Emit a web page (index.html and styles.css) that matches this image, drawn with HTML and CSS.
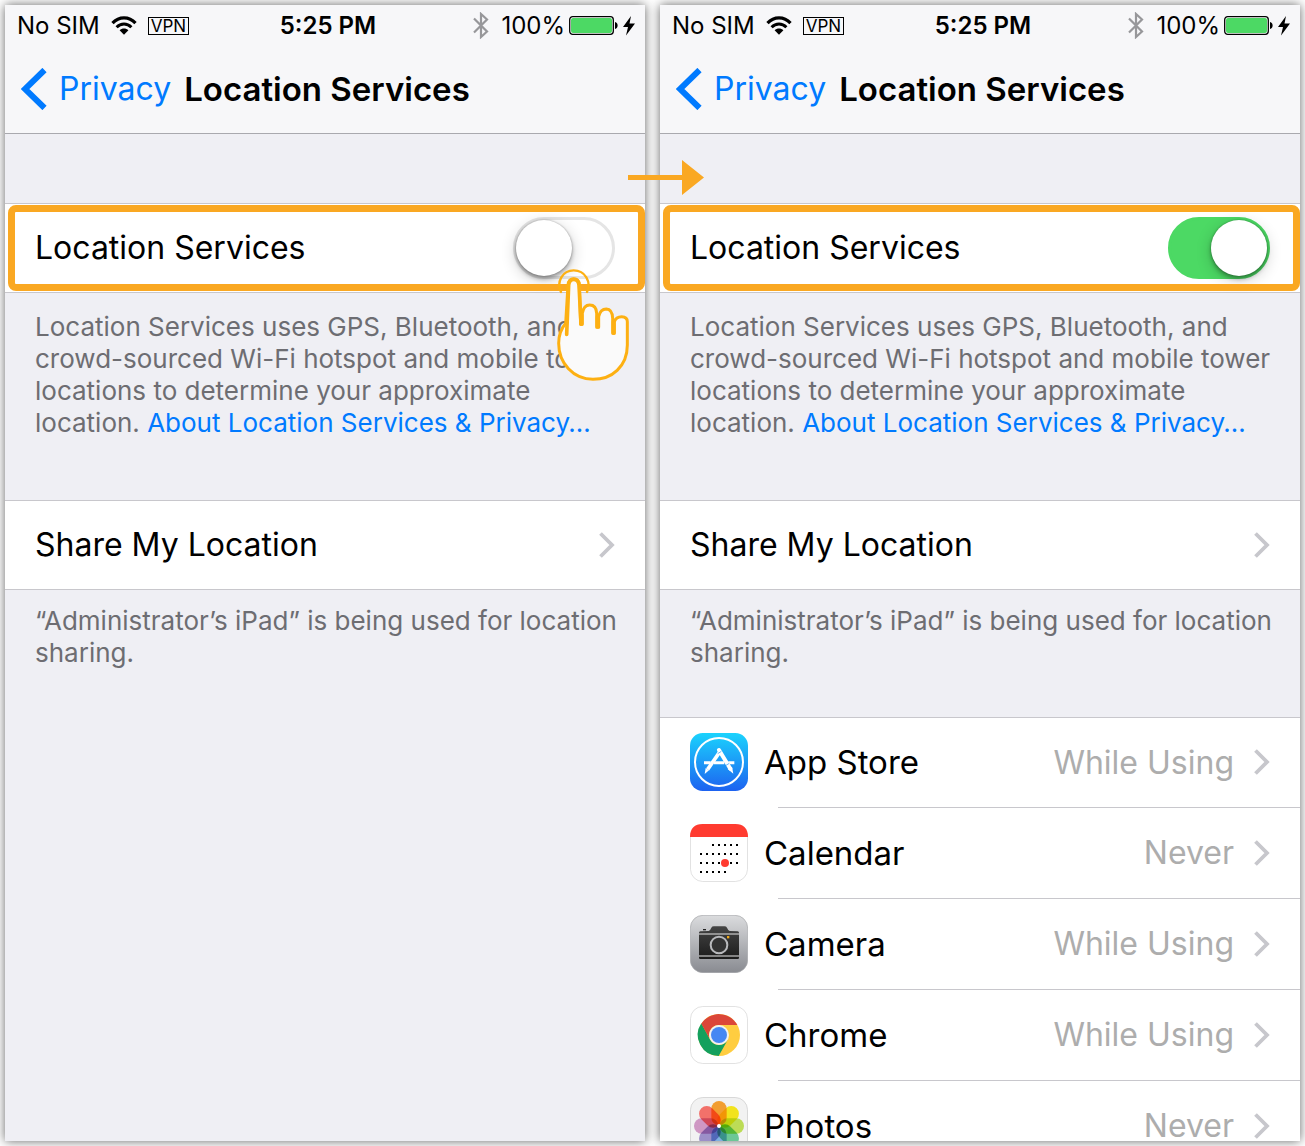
FILE: index.html
```html
<!DOCTYPE html>
<html lang="en">
<head>
  <meta charset="UTF-8" />
  <meta name="viewport" content="width=device-width, initial-scale=1.0" />
  <title>Location Services</title>
  <link rel="stylesheet" href="styles.css">
</head>
<body>

  <!-- shared icons -->
  <svg class="sprite" aria-hidden="true">
    <symbol id="wifi" viewBox="0 0 26 19">
      <path d="M1.5 7.2C8 .2 18 .2 24.500 7.200" fill="none" stroke="#000" stroke-width="3.200"/>
      <path d="M5.600 11.300C10 7 16 7 20.400 11.300" fill="none" stroke="#000" stroke-width="3"/>
      <path d="M8.600 14.300C11 12 15 12 17.400 14.300L13 18.800Z"/>
    </symbol>
    <symbol id="bluetooth" viewBox="0 0 16 27">
      <path d="M1 6.500L14 19.500L8 25V2L14 7.500L1 20.500" fill="none" stroke="#97979a" stroke-width="2.200"/>
    </symbol>
    <symbol id="battery" viewBox="0 0 50 19">
      <rect x=".7" y=".7" width="43.600" height="17.600" rx="3" fill="#fff" stroke="#000" stroke-width="1.300"/>
      <rect x="2" y="2" width="41" height="15" rx="2" fill="#4cd964"/>
      <path d="M46 6C49.500 6.500 49.500 12.500 46 13Z"/>
    </symbol>
    <symbol id="bolt" viewBox="0 0 12 20">
      <path d="M8 0L0 11H5L3 19.500L12 7.500H6.500Z"/>
    </symbol>
    <symbol id="back" viewBox="0 0 26 42">
      <path d="M23.500 2L4 21L23.500 40" fill="none" stroke="#007aff" stroke-width="6"/>
    </symbol>
    <symbol id="chevron" viewBox="0 0 16 26">
      <path d="M1.500 1.500L13 13L1.500 24.500" fill="none" stroke="#c7c7cc" stroke-width="3.800"/>
    </symbol>
  </svg>

  <main class="steps">

    <!-- step 1: switch is off -->
    <section class="screen">
      <div class="status">
        <div class="status-left">
          <span>No SIM</span>
          <svg class="wifi"><use href="#wifi"/></svg>
          <span class="vpn">VPN</span>
        </div>
        <strong class="time">5:25 PM</strong>
        <div class="status-right">
          <svg class="bluetooth"><use href="#bluetooth"/></svg>
          <span class="percent">100%</span>
          <svg class="battery"><use href="#battery"/></svg>
          <svg class="bolt"><use href="#bolt"/></svg>
        </div>
      </div>
      <nav class="navbar">
        <a class="back" href="#"><svg><use href="#back"/></svg>Privacy</a>
        <h1>Location Services</h1>
      </nav>

      <div class="row switch-row">
        <label for="location-off">Location Services</label>
        <input class="switch" type="checkbox" id="location-off">
        <div class="highlight"></div>
        <svg class="hand" viewBox="198 384 225 342" aria-hidden="true">
          <g stroke="#fdb012" stroke-linecap="round" stroke-linejoin="round">
            <path d="M213 456C198 425 218 391 251 391C285 391 305 425 291 456" fill="none" stroke-width="7"/>
            <path d="M227 550L234 435Q236 416 251 416Q267 416 268 435L272 553L277 553V520Q281 495 299 495Q319 495 320 520V562L326 562V530Q331 507 349 507Q367 508 368 535V580L373 580V545Q378 530 395 530Q412 530 412 545V615C412 680 365 718 309 718C250 718 206 670 206 610Q206 575 227 550Z" fill="#fafafa" stroke-width="9"/>
            <path d="M230 583L236 435Q238 418 251 418Q265 418 267 435L273 552" fill="none" stroke-width="11"/>
            <path d="M274 552V525M323 560V530M371 579V545" fill="none" stroke-width="12"/>
          </g>
        </svg>
      </div>
      <p class="note">Location Services uses GPS, Bluetooth, and crowd-sourced Wi-Fi hotspot and mobile tower locations to determine your approximate location. <a href="#">About Location Services &amp; Privacy…</a></p>

      <a class="row" href="#">
        <span>Share My Location</span>
        <svg class="chevron"><use href="#chevron"/></svg>
      </a>
      <p class="note sharing">“Administrator’s iPad” is being used for location sharing.</p>
    </section>

    <!-- step 2: switch is on, apps are listed -->
    <section class="screen">
      <div class="status">
        <div class="status-left">
          <span>No SIM</span>
          <svg class="wifi"><use href="#wifi"/></svg>
          <span class="vpn">VPN</span>
        </div>
        <strong class="time">5:25 PM</strong>
        <div class="status-right">
          <svg class="bluetooth"><use href="#bluetooth"/></svg>
          <span class="percent">100%</span>
          <svg class="battery"><use href="#battery"/></svg>
          <svg class="bolt"><use href="#bolt"/></svg>
        </div>
      </div>
      <nav class="navbar">
        <a class="back" href="#"><svg><use href="#back"/></svg>Privacy</a>
        <h1>Location Services</h1>
      </nav>

      <div class="row switch-row">
        <label for="location-on">Location Services</label>
        <input class="switch" type="checkbox" id="location-on" checked>
        <div class="highlight"></div>
      </div>
      <p class="note">Location Services uses GPS, Bluetooth, and crowd-sourced Wi-Fi hotspot and mobile tower locations to determine your approximate location. <a href="#">About Location Services &amp; Privacy…</a></p>

      <a class="row" href="#">
        <span>Share My Location</span>
        <svg class="chevron"><use href="#chevron"/></svg>
      </a>
      <p class="note sharing">“Administrator’s iPad” is being used for location sharing.</p>

      <div class="apps">
        <a class="app" href="#">
          <svg class="app-icon" viewBox="0 0 174 174">
            <defs>
              <linearGradient id="store-bg" x1="0" y1="0" x2="0" y2="1">
                <stop offset="0" stop-color="#1bd3fd"/>
                <stop offset="1" stop-color="#1d62f0"/>
              </linearGradient>
            </defs>
            <rect width="174" height="174" rx="38" fill="url(#store-bg)"/>
            <circle cx="87" cy="87" r="72" fill="none" stroke="#fff" stroke-width="6"/>
            <g stroke="#fff" stroke-width="9" fill="none">
              <path d="M42 89H62M72 89H103M115 89H133"/>
              <path d="M92 53L53 109" stroke-width="11"/>
              <path d="M87 51L121 107" stroke-width="12" stroke-linecap="round"/>
            </g>
            <path d="M47 105L57 112L44 123ZM113 108L126 101L130 122Z" fill="#fff"/>
            <path d="M83 62L94 55M108 97L118 91" stroke="#2196f8" stroke-width="2"/>
          </svg>
          <span class="app-name">App Store</span>
          <span class="app-access">While Using</span>
          <svg class="chevron"><use href="#chevron"/></svg>
        </a>
        <a class="app" href="#">
          <svg class="app-icon" viewBox="0 0 174 174">
            <rect x="1.500" y="1.500" width="171" height="171" rx="37" fill="#fff" stroke="#e2e2e2" stroke-width="3"/>
            <path d="M0 39C0 12 14 0 38 0H136C160 0 174 12 174 39Z" fill="#ff3b30"/>
            <g stroke="#000" stroke-width="6" stroke-dasharray="6 12">
              <path d="M66 63H144"/>
              <path d="M30 90H144"/>
              <path d="M30 117H144"/>
              <path d="M30 144H108"/>
            </g>
            <circle cx="105" cy="117" r="12" fill="#ff3b30"/>
          </svg>
          <span class="app-name">Calendar</span>
          <span class="app-access">Never</span>
          <svg class="chevron"><use href="#chevron"/></svg>
        </a>
        <a class="app" href="#">
          <svg class="app-icon" viewBox="0 0 174 174">
            <defs>
              <linearGradient id="camera-bg" x1="0" y1="0" x2="0" y2="1">
                <stop offset="0" stop-color="#dbdcde"/>
                <stop offset="1" stop-color="#898b91"/>
              </linearGradient>
              <linearGradient id="camera-body" x1="0" y1="0" x2="0" y2="1">
                <stop offset="0" stop-color="#444"/>
                <stop offset="1" stop-color="#1c1c1c"/>
              </linearGradient>
            </defs>
            <rect x="1" y="1" width="172" height="172" rx="38" fill="url(#camera-bg)" stroke="#a5a6a9" stroke-width="2"/>
            <path d="M27 53Q27 50 31 49L56 48Q61 46 64 38Q66 34 72 34H103Q109 34 111 38Q114 46 119 48L143 49Q147 50 147 53V129Q147 132 143 132H31Q27 132 27 129Z" fill="url(#camera-body)"/>
            <path d="M39 44H48" stroke="#222" stroke-width="4"/>
            <path d="M27 57H147M27 123H147" stroke="#e8e8e8" stroke-width="3"/>
            <circle cx="87" cy="90" r="25" fill="#333" stroke="#b8b9bc" stroke-width="6"/>
            <rect x="111" y="63" width="7" height="7" fill="#f0a818"/>
          </svg>
          <span class="app-name">Camera</span>
          <span class="app-access">While Using</span>
          <svg class="chevron"><use href="#chevron"/></svg>
        </a>
        <a class="app" href="#">
          <svg class="app-icon" viewBox="0 0 174 174">
            <rect x="1.500" y="1.500" width="171" height="171" rx="37" fill="#fff" stroke="#e2e2e2" stroke-width="3"/>
            <circle cx="87" cy="87" r="63" fill="#ffcd40"/>
            <path d="M34 52L61 102A30 30 0 0 0 113 102L86 150A63 63 0 0 1 34 52Z" fill="#14a05d"/>
            <path d="M34 53A63 63 0 0 1 142 57H87A30 30 0 0 0 61 102Z" fill="#db4639"/>
            <circle cx="87" cy="87" r="30" fill="#f1f1f1"/>
            <circle cx="87" cy="87" r="24" fill="#4687f3"/>
          </svg>
          <span class="app-name">Chrome</span>
          <span class="app-access">While Using</span>
          <svg class="chevron"><use href="#chevron"/></svg>
        </a>
        <a class="app" href="#">
          <svg class="app-icon petals" viewBox="0 0 174 174">
            <rect x="1.500" y="1.500" width="171" height="171" rx="37" fill="#f2f2f2" stroke="#d8d8d8" stroke-width="3"/>
            <rect x="64" y="12" width="46" height="73" rx="23" fill="#ffa733"/>
            <rect x="64" y="12" width="46" height="73" rx="23" fill="#fff01e" transform="rotate(45 87 87)"/>
            <rect x="64" y="12" width="46" height="73" rx="23" fill="#c6e85a" transform="rotate(90 87 87)"/>
            <rect x="64" y="12" width="46" height="73" rx="23" fill="#72d29e" transform="rotate(135 87 87)"/>
            <rect x="64" y="12" width="46" height="73" rx="23" fill="#86baec" transform="rotate(180 87 87)"/>
            <rect x="64" y="12" width="46" height="73" rx="23" fill="#a497d3" transform="rotate(225 87 87)"/>
            <rect x="64" y="12" width="46" height="73" rx="23" fill="#da9fce" transform="rotate(270 87 87)"/>
            <rect x="64" y="12" width="46" height="73" rx="23" fill="#ff7770" transform="rotate(315 87 87)"/>
            <circle cx="87" cy="87" r="6" fill="#fff"/>
          </svg>
          <span class="app-name">Photos</span>
          <span class="app-access">Never</span>
          <svg class="chevron"><use href="#chevron"/></svg>
        </a>
      </div>
    </section>

    <svg class="arrow" viewBox="0 0 76 36" aria-hidden="true">
      <path d="M0 15H54V0L76 17.500L54 35V20H0Z" fill="#faa822"/>
    </svg>
  </main>

</body>
</html>
```

FILE: styles.css
```css
* { box-sizing: border-box; }
body { margin: 0; background: #fff; color: #000; font-family: Inter, "Liberation Sans", sans-serif; font-size: 32px; }
a { color: inherit; text-decoration: none; }
svg { display: block; flex: none; }
.sprite { position: absolute; width: 0; height: 0; }

.steps { position: relative; display: flex; gap: 15px; height: 100vh; padding: 5px; overflow: hidden; }
.screen { flex: 1; min-width: 0; overflow: hidden; background: #efeff4; box-shadow: 0 0 10px rgba(0, 0, 0, 0.6); }

/* status bar */
.status { display: flex; justify-content: space-between; align-items: center; height: 41px; padding: 0 10px 0 12px; background: #f7f7f9; font-size: 24px; }
.status-left, .status-right { display: flex; align-items: center; flex: 1; }
.status-left { gap: 11px; }
.status-right { justify-content: flex-end; gap: 4px; }
.time { margin-left: 4px; font-weight: 600; }
.vpn { padding: 0 2px; border: 1px solid #000; font-size: 17px; line-height: 16px; }
.percent { margin-left: 8px; }
.wifi { width: 26px; height: 19px; }
.bluetooth { width: 16px; height: 27px; }
.battery { width: 50px; height: 19px; }
.bolt { width: 12px; height: 20px; }

/* title bar */
.navbar { display: flex; align-items: center; gap: 13px; height: 88px; padding: 0 16px 2px; background: #f7f7f9; border-bottom: 1px solid #a9a9ae; white-space: nowrap; }
.navbar h1 { margin: 0; font-size: 33px; font-weight: 600; }
.back { display: flex; align-items: center; gap: 12px; color: #007aff; }
.back svg { width: 26px; height: 42px; }

/* rows */
.row { position: relative; display: flex; align-items: center; justify-content: space-between; height: 90px; padding: 0 30px; background: #fff; border: 1px solid #c8c7cc; border-width: 1px 0; }
.row label, .row span { padding-bottom: 2px; }
.switch-row { margin-top: 69px; }
.chevron { width: 16px; height: 26px; }
.note { margin: 0; padding: 18px 20px 61px 30px; color: #6d6d72; font-size: 26px; line-height: 32px; }
.note a { color: #007aff; }
.sharing { padding-top: 15px; padding-bottom: 48px; }

.switch { appearance: none; position: relative; width: 102px; height: 62px; margin: 0; border: 3px solid #e5e5e5; border-radius: 31px; background: #fff; }
.switch::before { content: ""; position: absolute; top: 0; left: 0; width: 56px; height: 56px; border-radius: 50%; background: #fff; box-shadow: 0 3px 4px rgba(0, 0, 0, 0.3), 0 4px 16px rgba(0, 0, 0, 0.2), 0 0 2px rgba(0, 0, 0, 0.3); }
.switch:checked { border-color: #4cd964; background: #4cd964; }
.switch:checked::before { left: auto; right: 0; }

.highlight { position: absolute; inset: 1px 0 1px 3px; border: 7px solid #faa822; border-radius: 8px; pointer-events: none; }
.hand { position: absolute; z-index: 1; top: 64px; right: 14px; width: 75px; height: 114px; pointer-events: none; }
.arrow { position: absolute; top: 160px; left: calc(50% - 25px); width: 76px; height: 36px; }

/* app list */
.apps { background: #fff; border-top: 1px solid #c8c7cc; font-size: 33px; }
.app { display: flex; align-items: center; height: 91px; padding: 0 30px 2px; background: linear-gradient(#c8c7cc, #c8c7cc) no-repeat 118px 100% / 100% 1px; }
.app:first-child { height: 90px; }
.app-icon { width: 58px; height: 58px; margin-right: 16px; }
.app-name { flex: 1; }
.app-access { margin-right: 20px; color: #adadad; font-size: 32px; }
.petals { isolation: isolate; }
.petals rect { mix-blend-mode: multiply; }
```
